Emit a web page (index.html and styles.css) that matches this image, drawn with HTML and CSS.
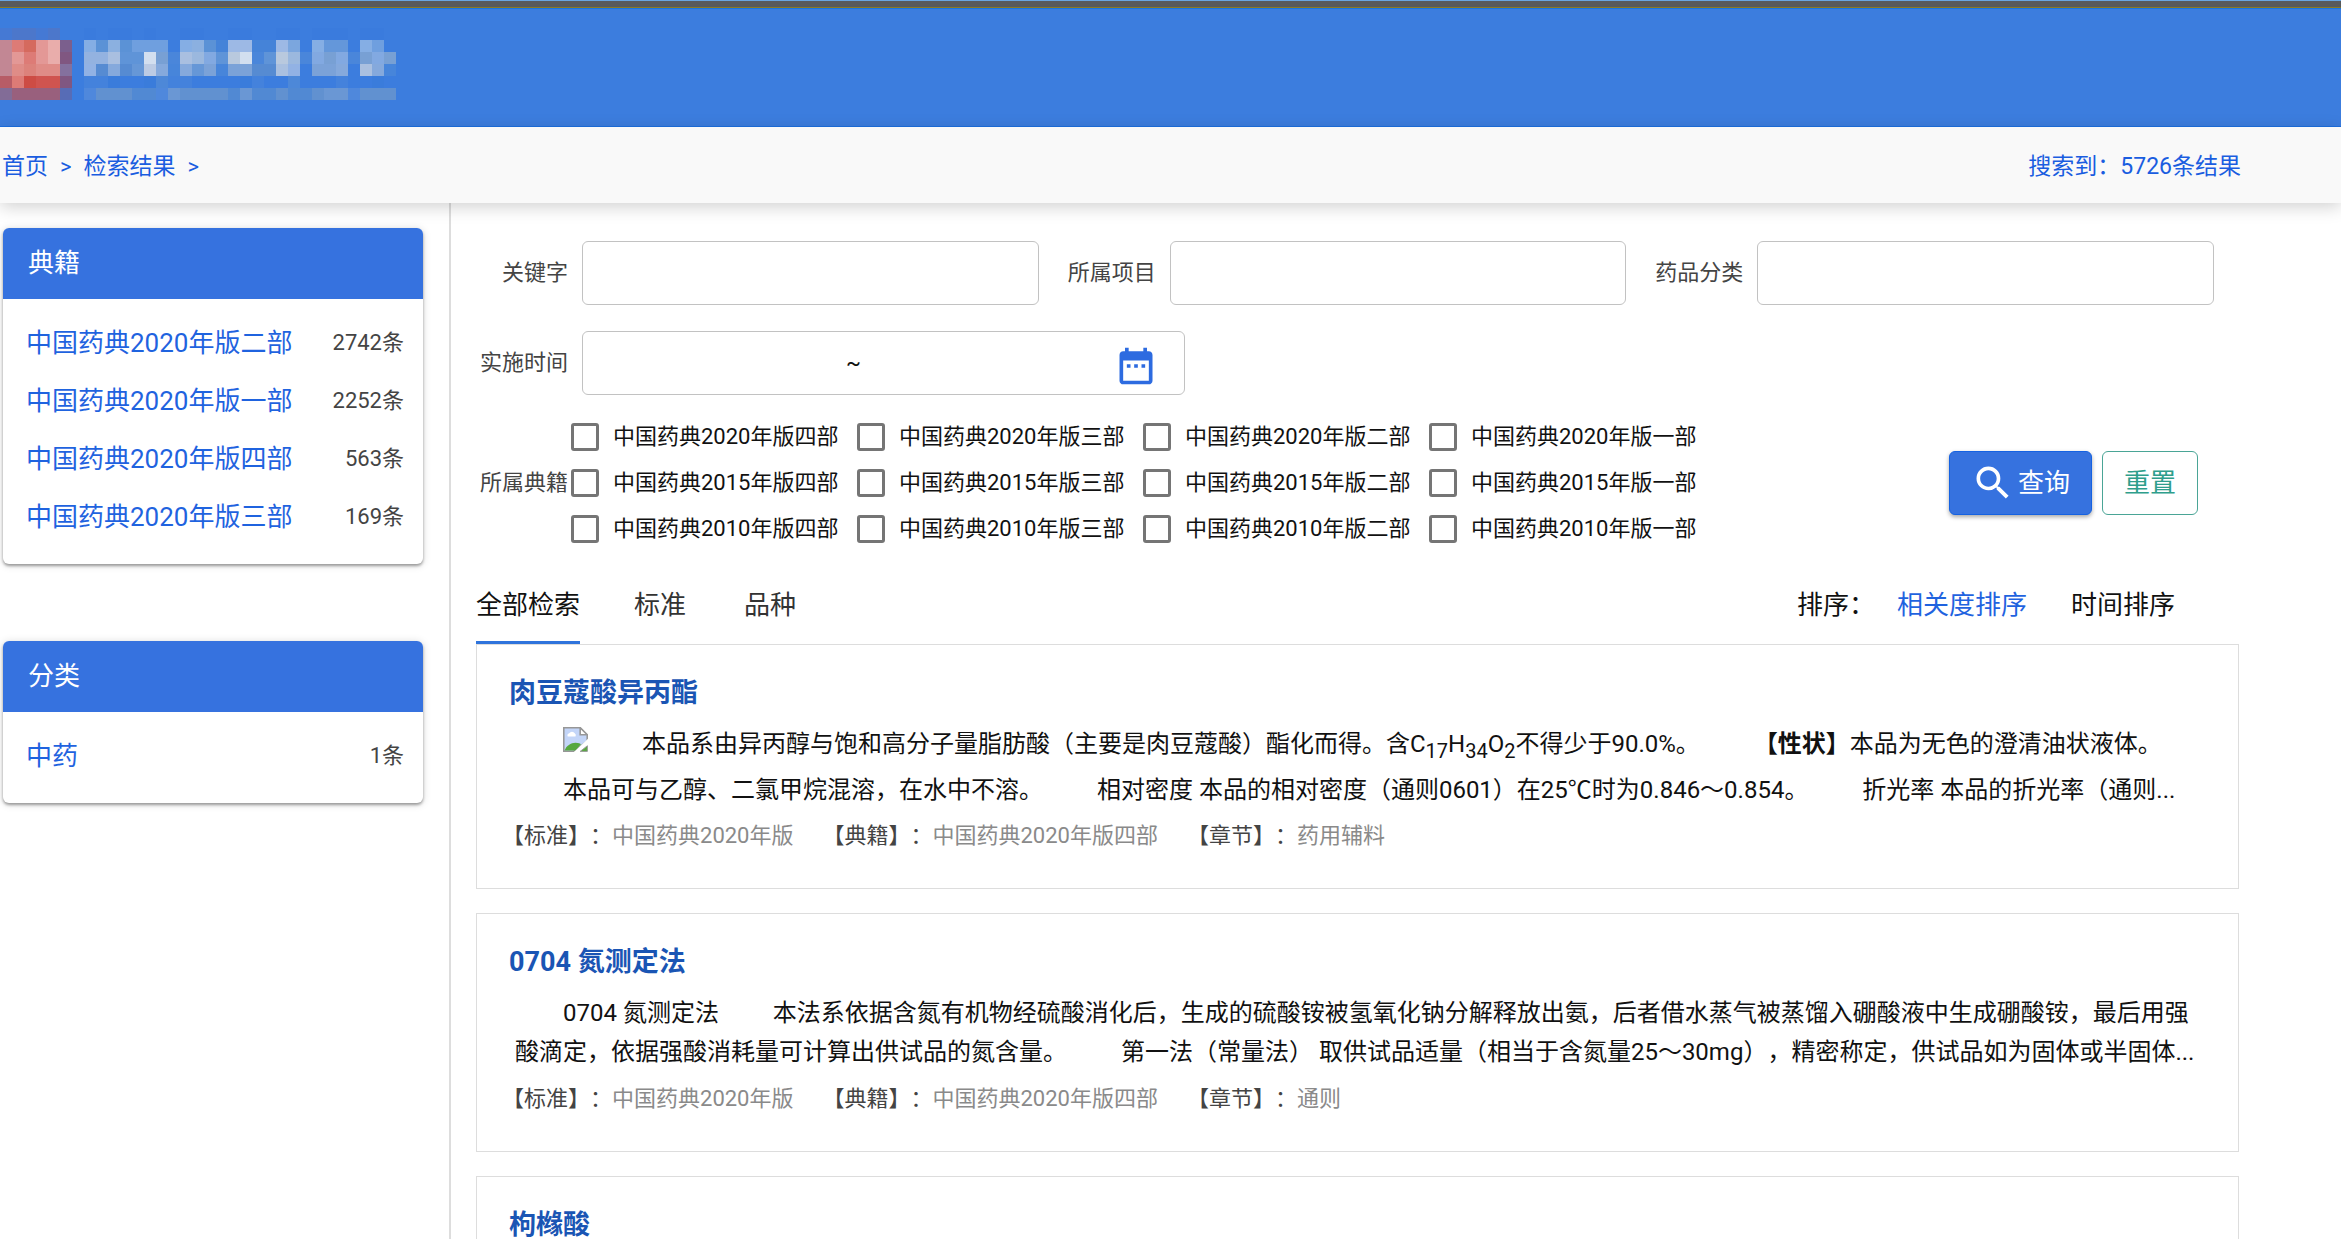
FILE: index.html
```html
<!DOCTYPE html>
<html lang="zh-CN">
<head>
<meta charset="utf-8">
<title>检索结果</title>
<meta name="viewport" content="width=device-width, initial-scale=1">
<link rel="stylesheet" href="styles.css">
</head>
<body>
<div class="app">
  <div class="window-edge"></div>
  <header class="banner">
    <svg class="logo" viewBox="0 0 34 6" shape-rendering="crispEdges" aria-hidden="true">
      <g stroke-width="1" fill="none">
        <path stroke="#4579d4" d="M0 .5h1M3 .5h1"/><path stroke="#4c77cb" d="M1 .5h2M4 .5h1"/>
        <path stroke="#3a7bdd" d="M7 .5h1M9 .5h2M12 .5h1M15 .5h2M19 .5h2M23 .5h2M26 .5h3M30 .5h2"/>
        <path stroke="#c28794" d="M0 1.5h1M0 2.5h1M0 3.5h1"/><path stroke="#dd7b76" d="M1 1.5h1M2 2.5h1M1 4.5h1"/>
        <path stroke="#d56a5e" d="M2 1.5h1"/><path stroke="#e39896" d="M3 1.5h1M1 2.5h1M3 2.5h1"/>
        <path stroke="#e9adab" d="M4 1.5h1M4 2.5h1"/><path stroke="#7b5f8d" d="M5 1.5h1"/><path stroke="#805781" d="M5 2.5h1M5 4.5h1"/>
        <path stroke="#df8c87" d="M1 3.5h1M3 3.5h2"/><path stroke="#dc827b" d="M2 3.5h1"/><path stroke="#84719e" d="M5 3.5h1"/>
        <path stroke="#b75c66" d="M0 4.5h1"/><path stroke="#cd4c44" d="M2 4.5h1"/><path stroke="#d0544f" d="M3 4.5h2"/>
        <path stroke="#826c97" d="M0 5.5h1"/><path stroke="#99607d" d="M1 5.5h4"/><path stroke="#576cb6" d="M5 5.5h1"/>
        <path stroke="#85aee4" d="M7 1.5h1M15 1.5h1M26 1.5h1M30 1.5h1"/><path stroke="#5b92d6" d="M8 1.5h1M10 1.5h1M17 1.5h1"/>
        <path stroke="#8bb0e0" d="M9 1.5h1M16 1.5h1"/><path stroke="#6f9fdf" d="M11 1.5h3M31 1.5h1"/>
        <path stroke="#9db9e5" d="M19 1.5h2M23 1.5h1"/><path stroke="#4583d8" d="M18 1.5h1M21 1.5h2"/>
        <path stroke="#7ba6de" d="M24 1.5h1"/><path stroke="#6497da" d="M27 1.5h2"/>
        <path stroke="#93b2e0" d="M7 2.5h1M8 2.5h1"/><path stroke="#a9bfe0" d="M9 2.5h1M15 2.5h1"/>
        <path stroke="#5f94d8" d="M10 2.5h2M18 2.5h1M22 2.5h1"/><path stroke="#d3dfef" d="M12 2.5h1M20 2.5h1"/>
        <path stroke="#78a0d4" d="M13 2.5h1M27 2.5h1M30 2.5h1M32 2.5h1"/><path stroke="#4a86da" d="M14 2.5h1M21 2.5h1M25 2.5h1M29 2.5h1"/>
        <path stroke="#9bb8de" d="M16 2.5h1M24 2.5h1"/><path stroke="#82a9e1" d="M17 2.5h1M26 2.5h1M28 2.5h1M31 2.5h1"/>
        <path stroke="#b9c9de" d="M19 2.5h1M23 2.5h1"/>
        <path stroke="#92b2e4" d="M7 3.5h1M24 3.5h1"/><path stroke="#568bd2" d="M8 3.5h1M10 3.5h1M21 3.5h2"/>
        <path stroke="#85a9dc" d="M9 3.5h1M13 3.5h1M15 3.5h1M28 3.5h1M31 3.5h1"/><path stroke="#6697d7" d="M11 3.5h1M16 3.5h1"/>
        <path stroke="#bccbe4" d="M12 3.5h1"/><path stroke="#4785da" d="M14 3.5h1M18 3.5h1M32 3.5h1"/>
        <path stroke="#7ba2d8" d="M17 3.5h1M19 3.5h2M26 3.5h2"/><path stroke="#aac0e0" d="M23 3.5h1M30 3.5h1"/>
        <path stroke="#4482dc" d="M7 4.5h2M13 4.5h3M21 4.5h1M28 4.5h1"/><path stroke="#4d88d8" d="M13 4.5h1M24 4.5h1"/>
        <path stroke="#3a7cdb" d="M9 4.5h1M12 4.5h1M20 4.5h1M31 4.5h1"/>
        <path stroke="#4f88dc" d="M7 5.5h1M13 5.5h1M29 5.5h1"/><path stroke="#6191d0" d="M8 5.5h3M15 5.5h4M23 5.5h1M26 5.5h1M30 5.5h3"/>
        <path stroke="#5189d3" d="M11 5.5h2M19 5.5h1M21 5.5h2M24 5.5h2"/><path stroke="#6a97d4" d="M14 5.5h1M20 5.5h1M27 5.5h2"/>
      </g>
    </svg>
  </header>

  <nav class="crumbs" aria-label="面包屑">
    <div class="crumb-path"><a href="#">首页</a><span>&gt;</span><a href="#">检索结果</a><span>&gt;</span></div>
    <div class="total">搜索到：5726条结果</div>
  </nav>

  <div class="content">
    <aside class="sidebar">
      <section class="facet">
        <h2 class="facet-title">典籍</h2>
        <ul class="facet-list">
          <li><a href="#">中国药典2020年版二部</a><span>2742条</span></li>
          <li><a href="#">中国药典2020年版一部</a><span>2252条</span></li>
          <li><a href="#">中国药典2020年版四部</a><span>563条</span></li>
          <li><a href="#">中国药典2020年版三部</a><span>169条</span></li>
        </ul>
      </section>
      <section class="facet">
        <h2 class="facet-title">分类</h2>
        <ul class="facet-list">
          <li><a href="#">中药</a><span>1条</span></li>
        </ul>
      </section>
    </aside>

    <main class="main">
      <form class="search">
        <div class="field-row">
          <div class="field"><label class="label" for="kw">关键字</label><input class="box" id="kw" type="text"></div>
          <div class="field"><label class="label" for="project">所属项目</label><input class="box" id="project" type="text"></div>
          <div class="field"><label class="label" for="category">药品分类</label><input class="box" id="category" type="text"></div>
        </div>
        <div class="field date-row">
          <label class="label" for="from">实施时间</label>
          <div class="box date-box">
            <input class="date-input" id="from" type="text">
            <span class="tilde">~</span>
            <input class="date-input" type="text" aria-label="结束时间">
            <button class="icon-button" type="button" aria-label="选择日期">
              <svg class="icon" viewBox="0 0 24 24"><path fill="currentColor" d="M9 11H7v2h2v-2zm4 0h-2v2h2v-2zm4 0h-2v2h2v-2zm2-7h-1V2h-2v2H8V2H6v2H5c-1.110 0-1.990.9-1.990 2L3 20c0 1.100.89 2 2 2h14c1.100 0 2-.9 2-2V6c0-1.100-.9-2-2-2zm0 16H5V9h14v11z"/></svg>
            </button>
          </div>
        </div>
        <div class="books-row">
          <span class="label" id="books">所属典籍</span>
          <div class="books" role="group" aria-labelledby="books">
            <label class="check"><input type="checkbox">中国药典2020年版四部</label>
            <label class="check"><input type="checkbox">中国药典2020年版三部</label>
            <label class="check"><input type="checkbox">中国药典2020年版二部</label>
            <label class="check"><input type="checkbox">中国药典2020年版一部</label>
            <label class="check"><input type="checkbox">中国药典2015年版四部</label>
            <label class="check"><input type="checkbox">中国药典2015年版三部</label>
            <label class="check"><input type="checkbox">中国药典2015年版二部</label>
            <label class="check"><input type="checkbox">中国药典2015年版一部</label>
            <label class="check"><input type="checkbox">中国药典2010年版四部</label>
            <label class="check"><input type="checkbox">中国药典2010年版三部</label>
            <label class="check"><input type="checkbox">中国药典2010年版二部</label>
            <label class="check"><input type="checkbox">中国药典2010年版一部</label>
          </div>
          <div class="actions">
            <button class="button primary" type="submit">
              <svg class="icon" viewBox="0 0 24 24"><path fill="currentColor" d="M9.500 3A6.500 6.500 0 0 1 16 9.500c0 1.610-.59 3.090-1.560 4.230l.27.27h.79l5 5-1.500 1.500-5-5v-.79l-.27-.27A6.516 6.516 0 0 1 9.500 16a6.500 6.500 0 0 1 0-13m0 2C7 5 5 7 5 9.500S7 14 9.500 14 14 12 14 9.500 12 5 9.500 5z"/></svg>
              查询
            </button>
            <button class="button outline" type="reset">重置</button>
          </div>
        </div>
      </form>

      <div class="toolbar">
        <div class="tabs">
          <a class="tab active" href="#">全部检索</a>
          <a class="tab" href="#">标准</a>
          <a class="tab" href="#">品种</a>
        </div>
        <div class="sort">
          <span>排序：</span>
          <a class="sort-link current" href="#">相关度排序</a>
          <a class="sort-link" href="#">时间排序</a>
        </div>
      </div>

      <div class="results">
        <article class="card">
          <h3 class="card-title"><a href="#">肉豆蔻酸异丙酯</a></h3>
          <p class="desc loose"><svg class="broken" viewBox="0 0 16 16" role="img" aria-label="图片"><path fill="#c3d5f8" stroke="#979797" d="M.5.5h10.500l4.500 4.500v4L7 15.500H.5z"/><path fill="#fff" stroke="#979797" d="M11 .5V5h4.500z"/><path fill="#fff" d="M3 6a1.500 1.500 0 0 1 1-2 2 2 0 0 1 3.500 0A1.500 1.500 0 0 1 8 6z"/><path fill="#56a83e" d="M1 15c1-3 4-5 7-5 2 0 3 .5 3.500 1L8 15z"/><path fill="#fff" d="M16 7.500V10l-6 6H7z"/><path fill="#56a83e" stroke="#979797" stroke-width=".6" d="M15.600 12v3.600H11z"/></svg>　　 本品系由异丙醇与饱和高分子量脂肪酸（主要是肉豆蔻酸）酯化而得。含C<sub>17</sub>H<sub>34</sub>O<sub>2</sub>不得少于90.0%。　　 <b>【性状】</b>本品为无色的澄清油状液体。<br>本品可与乙醇、二氯甲烷混溶，在水中不溶。　　 相对密度 本品的相对密度（通则0601）在25℃时为0.846～0.854。　　 折光率 本品的折光率（通则...</p>
          <dl class="meta">
            <div><dt>【标准】：</dt><dd>中国药典2020年版</dd></div>
            <div><dt>【典籍】：</dt><dd>中国药典2020年版四部</dd></div>
            <div><dt>【章节】：</dt><dd>药用辅料</dd></div>
          </dl>
        </article>

        <article class="card">
          <h3 class="card-title"><a href="#">0704 氮测定法</a></h3>
          <p class="desc tight">　　0704 氮测定法　　 本法系依据含氮有机物经硫酸消化后，生成的硫酸铵被氢氧化钠分解释放出氨，后者借水蒸气被蒸馏入硼酸液中生成硼酸铵，最后用强<br>酸滴定，依据强酸消耗量可计算出供试品的氮含量。　　 第一法（常量法） 取供试品适量（相当于含氮量25～30mg），精密称定，供试品如为固体或半固体...</p>
          <dl class="meta">
            <div><dt>【标准】：</dt><dd>中国药典2020年版</dd></div>
            <div><dt>【典籍】：</dt><dd>中国药典2020年版四部</dd></div>
            <div><dt>【章节】：</dt><dd>通则</dd></div>
          </dl>
        </article>

        <article class="card">
          <h3 class="card-title"><a href="#">枸橼酸</a></h3>
        </article>
      </div>
    </main>
  </div>
</div>
</body>
</html>
```

FILE: styles.css
```css
* {
  box-sizing: border-box;
}

body {
  margin: 0;
  background: #fff;
  color: #111;
  font-family: Roboto, "Noto Sans CJK SC", sans-serif;
  font-size: 22px;
  line-height: 32px;
  text-spacing-trim: space-all;
}

a {
  color: inherit;
  text-decoration: none;
}

h2, h3, p, ul, dl, dd {
  margin: 0;
  padding: 0;
}

button, input {
  font: inherit;
}

.app {
  display: flex;
  flex-direction: column;
  height: 100vh;
  overflow: hidden;
}

.window-edge {
  flex: none;
  height: 9px;
  background: linear-gradient(#6aa5e0 0 1px, #58595b 1px 7px, #8c7a20 7px 8px, #1c74dc 8px);
}

.banner {
  flex: none;
  height: 118px;
  padding-top: 19px;
  background: #3c7dde;
  border-bottom: 1px solid #1c6fe0;
}

.logo {
  display: block;
  width: 408px;
  height: 72px;
}

.crumbs {
  position: relative;
  z-index: 1;
  flex: none;
  display: flex;
  justify-content: space-between;
  align-items: center;
  height: 76px;
  padding: 4px 100px 0 2px;
  background: #f9f9f9;
  box-shadow: 0 4px 16px rgba(0, 0, 0, .18);
  color: #1a5de0;
  font-size: 23px;
}

.crumb-path {
  display: flex;
  align-items: center;
  gap: 12px;
}

.crumb-path span {
  font-size: 22px;
}

.content {
  flex: 1;
  display: flex;
  min-height: 0;
}

.sidebar {
  flex: none;
  display: flex;
  flex-direction: column;
  gap: 77px;
  width: 451px;
  padding: 25px 26px 0 3px;
  border-right: 2px solid #ddd;
}

.facet {
  border-radius: 6px;
  background: #fff;
  box-shadow: 0 2px 3px rgba(0, 0, 0, .35), 0 1px 8px rgba(0, 0, 0, .15);
}

.facet-title {
  padding: 0 25px;
  border-radius: 6px 6px 0 0;
  background: #3672df;
  color: #fff;
  font-size: 26px;
  font-weight: 400;
  line-height: 71px;
}

.facet-list {
  padding: 15px 19px 18px 23px;
  list-style: none;
}

.facet-list li {
  display: flex;
  justify-content: space-between;
  align-items: center;
  height: 58px;
}

.facet-list a {
  color: #1f63df;
  font-size: 26px;
}

.facet-list span {
  color: #444;
}

.main {
  flex: 1;
  min-width: 0;
  padding: 38px 102px 0 25px;
}

.field-row {
  display: grid;
  grid-template-columns: repeat(3, 1fr);
}

.field {
  display: flex;
  align-items: center;
  gap: 14px;
  padding-right: 25px;
}

.label {
  flex: none;
  width: 92px;
  color: #444;
  text-align: right;
}

.box {
  flex: 1;
  min-width: 0;
  height: 64px;
  border: 1px solid #c2c2c2;
  border-radius: 6px;
  background: #fff;
}

.date-row {
  margin-top: 26px;
}

.date-box {
  display: flex;
  align-items: center;
  max-width: 603px;
  padding: 0 26px 0 10px;
}

.date-input {
  flex: 1;
  min-width: 0;
  height: 100%;
  border: 0;
  background: none;
}

.tilde {
  width: 24px;
  text-align: center;
}

.icon-button {
  display: flex;
  padding: 6px 0 0;
  border: 0;
  background: none;
  color: #2d6be0;
}

.icon {
  width: 44px;
  height: 44px;
}

.books-row {
  display: flex;
  align-items: center;
  gap: 3px;
  margin-top: 19px;
}

.books {
  display: grid;
  grid-template-columns: repeat(4, 286px);
  grid-auto-rows: 46px;
}

.check {
  display: flex;
  align-items: center;
  gap: 14px;
  white-space: nowrap;
}

.check input {
  appearance: none;
  width: 28px;
  height: 28px;
  margin: 0;
  border: 3px solid #757575;
  border-radius: 3px;
}

.actions {
  display: flex;
  gap: 10px;
  margin-left: auto;
  padding-right: 41px;
}

.button {
  display: flex;
  align-items: center;
  gap: 3px;
  height: 64px;
  border: 1px solid;
  border-radius: 6px;
  font-size: 26px;
  white-space: nowrap;
}

.primary {
  padding: 0 21px;
  border-color: #1562e2;
  background: #3672df;
  box-shadow: 0 2px 4px rgba(0, 0, 0, .35);
  color: #fff;
}

.outline {
  padding: 0 21px;
  border-color: #4aa596;
  background: #fff;
  color: #2f9e8c;
}

.toolbar {
  display: flex;
  justify-content: space-between;
  margin-top: 14px;
  font-size: 26px;
  line-height: 78px;
}

.tabs {
  display: flex;
  gap: 50px;
}

.tab {
  height: 78px;
  padding: 0 4px;
  color: #333;
}

.active {
  padding: 0;
  color: #111;
  box-shadow: inset 0 -3px #2f74dc;
}

.sort {
  display: flex;
  gap: 44px;
  padding-right: 64px;
}

.sort span {
  width: 56px;
  white-space: nowrap;
}

.current {
  color: #1f63df;
}

.results {
  display: flex;
  flex-direction: column;
  gap: 24px;
}

.card {
  padding: 30px 32px 36px 25px;
  border: 1px solid #ddd;
}

.card-title {
  padding-left: 7px;
  color: #1a55b4;
  font-size: 27px;
  font-weight: 700;
  line-height: 36px;
}

.desc {
  margin-top: 10px;
  padding-left: 13px;
  font-size: 24px;
  white-space: nowrap;
}

.loose {
  padding-left: 61px;
  line-height: 46px;
}

.tight {
  padding-top: 4px;
  padding-bottom: 4px;
  line-height: 39px;
}

.desc sub {
  font-size: 20px;
  line-height: 0;
}

.broken {
  width: 25px;
  height: 25px;
}

.meta {
  display: flex;
  gap: 29px;
  margin-top: 7px;
  line-height: 32px;
}

.meta div {
  display: flex;
}

.meta dt {
  color: #444;
}

.meta dd {
  color: #8a8a8a;
}
```
